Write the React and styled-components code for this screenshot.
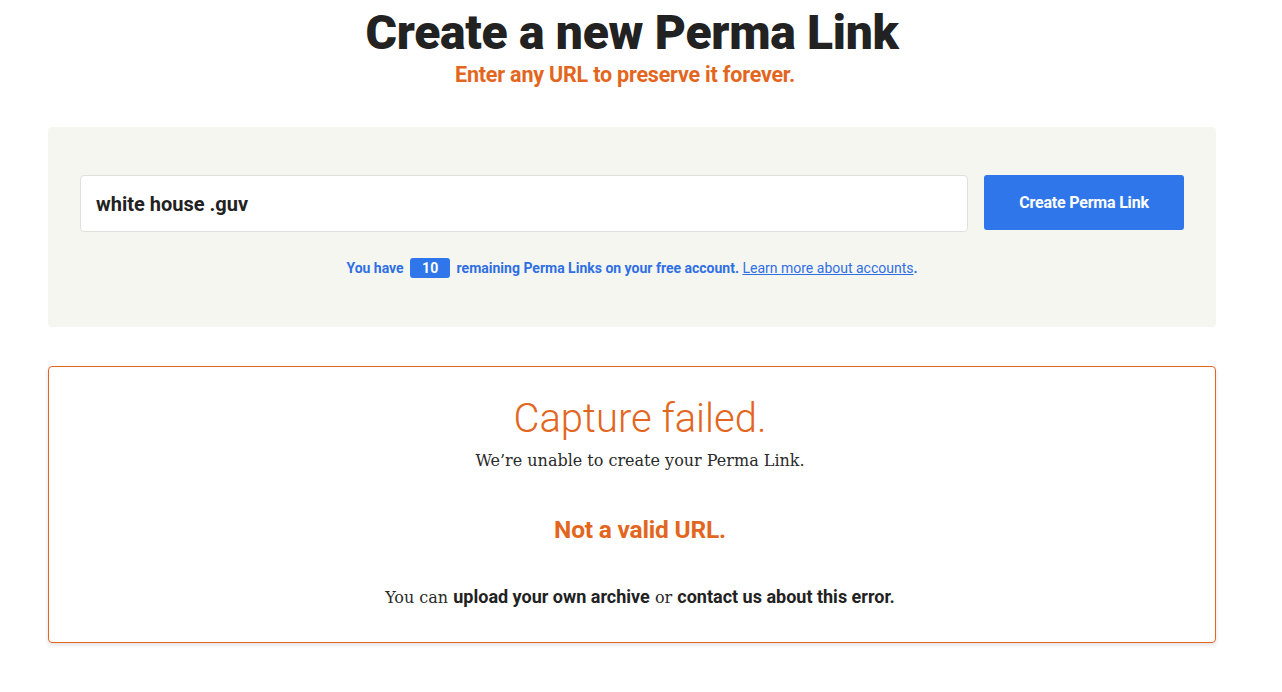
import React from "react";
import styled, { createGlobalStyle } from "styled-components";

const GlobalStyle = createGlobalStyle`
  body {
    margin: 0;
    background: #fff;
    font-family: Roboto, "Liberation Sans", sans-serif;
    color: #222;
  }
`;

const Page = styled.div`
  padding: 0 66px 40px 48px;
`;

const Header = styled.header`
  text-align: center;
  padding-top: 4px;
`;

const Title = styled.h1`
  margin: 0;
  font-size: 48px;
  font-weight: 900;
  line-height: 58px;
  color: #222;
  letter-spacing: -0.3px;
`;

const Subtitle = styled.p`
  margin: 0;
  padding-right: 14px;
  font-size: 21.5px;
  font-weight: 700;
  line-height: 26px;
  color: #e36620;
  letter-spacing: -0.2px;
`;

const CreatePanel = styled.section`
  margin-top: 39px;
  background: #f6f6f1;
  border-radius: 4px;
  padding: 48px 32px 49px;
`;

const FormRow = styled.form`
  display: flex;
  gap: 16px;
  align-items: flex-start;
`;

const UrlInput = styled.input`
  flex: 1;
  box-sizing: border-box;
  height: 57px;
  border: 1px solid #e0e0dc;
  border-radius: 4px;
  background: #fff;
  padding: 0 15px;
  font-family: Roboto, "Liberation Sans", sans-serif;
  font-size: 20px;
  font-weight: 700;
  color: #222;
  outline: none;
`;

const SubmitButton = styled.button`
  width: 200px;
  height: 55px;
  border: none;
  border-radius: 3px;
  background: #2f76ea;
  color: #fff;
  font-family: Roboto, "Liberation Sans", sans-serif;
  font-size: 16px;
  font-weight: 700;
  letter-spacing: -0.2px;
  cursor: pointer;
`;

const Notice = styled.p`
  margin: 26px 0 0;
  text-align: center;
  font-size: 14px;
  font-weight: 700;
  color: #2f6fe4;
`;

const Badge = styled.span`
  display: inline-block;
  min-width: 40px;
  box-sizing: border-box;
  margin: 0 3px;
  padding: 1px 0;
  border-radius: 3px;
  background: #2f76ea;
  color: #fff;
  text-align: center;
  line-height: 18px;
`;

const InfoLink = styled.a`
  font-weight: 400;
  color: #2f6fe4;
  text-decoration: underline;
`;

const ErrorBox = styled.section`
  margin-top: 39px;
  border: 1px solid #e36620;
  border-radius: 4px;
  box-shadow: 0 2px 4px rgba(0, 0, 0, 0.12);
  padding: 28px 16px 32px 32px;
  text-align: center;
`;

const ErrorTitle = styled.h2`
  margin: 0;
  font-size: 40px;
  font-weight: 300;
  line-height: 48px;
  color: #e36620;
`;

const SerifText = styled.p`
  margin: ${(p) => p.$top || 0}px 0 0;
  font-family: "DejaVu Serif", "Liberation Serif", serif;
  font-size: 16px;
  font-weight: 300;
  line-height: 24px;
  color: #2a2a2a;
`;

const Strong = styled.strong`
  font-family: Roboto, "Liberation Sans", sans-serif;
  font-size: 18px;
  font-weight: 700;
  color: #222;
`;

const ErrorReason = styled.h3`
  margin: 42px 0 0;
  font-size: 24.5px;
  font-weight: 700;
  line-height: 30px;
  color: #e36620;
  letter-spacing: -0.2px;
`;

export default function App() {
  return (
    <Page>
      <GlobalStyle />
      <Header>
        <Title>Create a new Perma Link</Title>
        <Subtitle>Enter any URL to preserve it forever.</Subtitle>
      </Header>

      <CreatePanel>
        <FormRow onSubmit={(e) => e.preventDefault()}>
          <UrlInput type="text" defaultValue="white house .guv" />
          <SubmitButton type="submit">Create Perma Link</SubmitButton>
        </FormRow>
        <Notice>
          You have <Badge>10</Badge> remaining Perma Links on your free account.{" "}
          <InfoLink href="#">Learn more about accounts</InfoLink>.
        </Notice>
      </CreatePanel>

      <ErrorBox>
        <ErrorTitle>Capture failed.</ErrorTitle>
        <SerifText $top={6}>We’re unable to create your Perma Link.</SerifText>
        <ErrorReason>Not a valid URL.</ErrorReason>
        <SerifText $top={40}>
          You can <Strong>upload your own archive</Strong> or{" "}
          <Strong>contact us about this error.</Strong>
        </SerifText>
      </ErrorBox>
    </Page>
  );
}
